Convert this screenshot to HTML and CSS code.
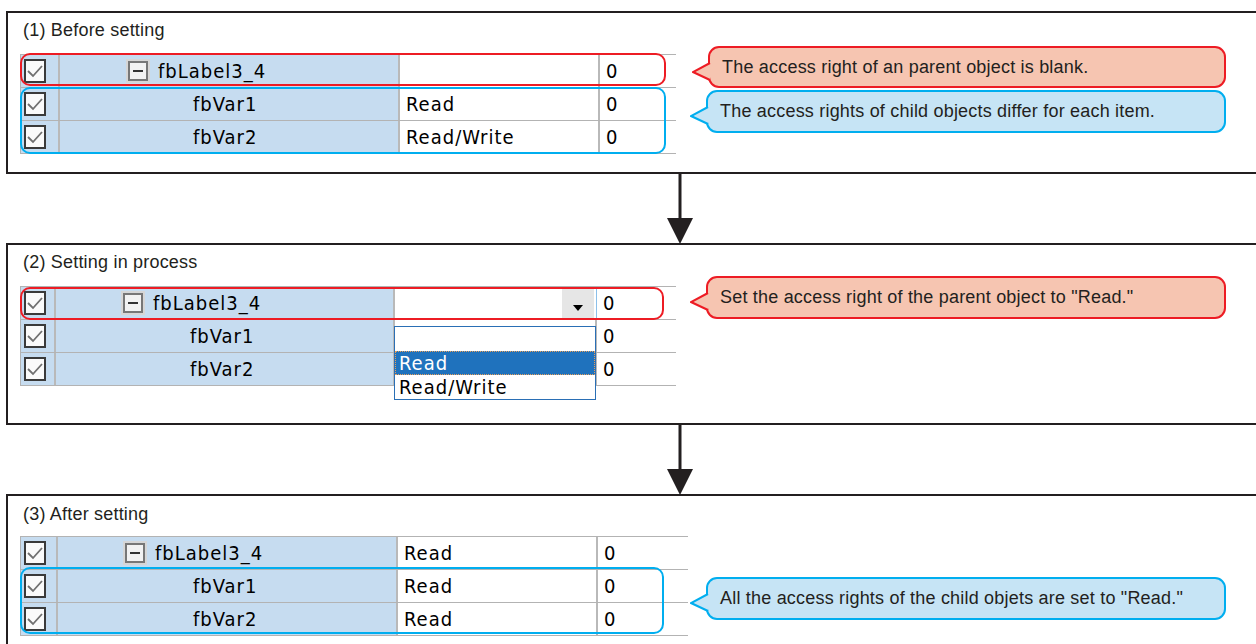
FILE: index.html
```html
<!DOCTYPE html>
<html>
<head>
  <title>Access Right Setting</title>
  <link rel="stylesheet" href="styles.css">
</head>
<body>
  <div class="page">

    <section class="panel panel-before">
      <h2 class="panel-title">(1) Before setting</h2>
      <div class="grid-wrap">
        <div class="grid">
          <div class="row">
            <div class="cell cell-check"><span class="checkbox"></span></div>
            <div class="cell cell-name parent"><span class="toggle"></span>fbLabel3_4</div>
            <div class="cell cell-access"></div>
            <div class="cell cell-value">0</div>
          </div>
          <div class="row">
            <div class="cell cell-check"><span class="checkbox"></span></div>
            <div class="cell cell-name child">fbVar1</div>
            <div class="cell cell-access">Read</div>
            <div class="cell cell-value">0</div>
          </div>
          <div class="row">
            <div class="cell cell-check"><span class="checkbox"></span></div>
            <div class="cell cell-name child">fbVar2</div>
            <div class="cell cell-access">Read/Write</div>
            <div class="cell cell-value">0</div>
          </div>
        </div>
        <div class="mark mark-red mark-parent"></div>
        <div class="mark mark-blue mark-children"></div>
      </div>
      <div class="notes">
        <div class="note note-red">
          <svg class="pointer" width="19" height="22" viewBox="0 0 19 22"><path d="M18 2 L1 11 L18 19"/></svg>
          The access right of an parent object is blank.
        </div>
        <div class="note note-blue">
          <svg class="pointer" width="19" height="22" viewBox="0 0 19 22"><path d="M18 2 L1 11 L18 19"/></svg>
          The access rights of child objects differ for each item.
        </div>
      </div>
    </section>

    <div class="connector">
      <svg width="28" height="70" viewBox="0 0 28 70"><line x1="14" y1="0" x2="14" y2="48"/><polygon points="1,44 27,44 14,70"/></svg>
    </div>

    <section class="panel panel-process">
      <h2 class="panel-title">(2) Setting in process</h2>
      <div class="grid-wrap">
        <div class="grid">
          <div class="row">
            <div class="cell cell-check"><span class="checkbox"></span></div>
            <div class="cell cell-name parent"><span class="toggle"></span>fbLabel3_4</div>
            <div class="cell cell-access combo"><span class="combo-btn"></span></div>
            <div class="cell cell-value focus">0</div>
          </div>
          <div class="row">
            <div class="cell cell-check"><span class="checkbox"></span></div>
            <div class="cell cell-name child">fbVar1</div>
            <div class="cell cell-access"></div>
            <div class="cell cell-value">0</div>
          </div>
          <div class="row">
            <div class="cell cell-check"><span class="checkbox"></span></div>
            <div class="cell cell-name child">fbVar2</div>
            <div class="cell cell-access"></div>
            <div class="cell cell-value">0</div>
          </div>
        </div>
        <ul class="dropdown">
          <li></li>
          <li class="selected">Read</li>
          <li>Read/Write</li>
        </ul>
        <div class="mark mark-red mark-parent"></div>
      </div>
      <div class="notes">
        <div class="note note-red">
          <svg class="pointer" width="19" height="22" viewBox="0 0 19 22"><path d="M18 2 L1 11 L18 19"/></svg>
          Set the access right of the parent object to "Read."
        </div>
      </div>
    </section>

    <div class="connector">
      <svg width="28" height="70" viewBox="0 0 28 70"><line x1="14" y1="0" x2="14" y2="48"/><polygon points="1,44 27,44 14,70"/></svg>
    </div>

    <section class="panel panel-after">
      <h2 class="panel-title">(3) After setting</h2>
      <div class="grid-wrap">
        <div class="grid">
          <div class="row">
            <div class="cell cell-check"><span class="checkbox"></span></div>
            <div class="cell cell-name parent"><span class="toggle"></span>fbLabel3_4</div>
            <div class="cell cell-access">Read</div>
            <div class="cell cell-value">0</div>
          </div>
          <div class="row">
            <div class="cell cell-check"><span class="checkbox"></span></div>
            <div class="cell cell-name child">fbVar1</div>
            <div class="cell cell-access">Read</div>
            <div class="cell cell-value">0</div>
          </div>
          <div class="row">
            <div class="cell cell-check"><span class="checkbox"></span></div>
            <div class="cell cell-name child">fbVar2</div>
            <div class="cell cell-access">Read</div>
            <div class="cell cell-value">0</div>
          </div>
        </div>
        <div class="mark mark-blue mark-children"></div>
      </div>
      <div class="notes">
        <div class="note note-blue">
          <svg class="pointer" width="19" height="22" viewBox="0 0 19 22"><path d="M18 2 L1 11 L18 19"/></svg>
          All the access rights of the child objets are set to "Read."
        </div>
      </div>
    </section>

  </div>
</body>
</html>
```

FILE: styles.css
```css
html, body {
  margin: 0;
  height: 644px;
  overflow: hidden;
  background: #fff;
}

body {
  font-family: "Liberation Sans", Arial, sans-serif;
  color: #231f20;
}

.page {
  padding: 11px 0 0 6px;
}

/* panels */

.panel {
  width: 1280px;
  border: 2px solid #231f20;
  box-sizing: border-box;
  display: grid;
  grid-template-columns: 698px 520px;
  grid-template-rows: auto 1fr;
}

.panel-before {
  height: 163px;
  padding-top: 7px;
}

.panel-process {
  height: 182px;
  padding-top: 7px;
}

.panel-after {
  height: 200px;
  padding-top: 8px;
}

.panel-title {
  grid-column: 1;
  grid-row: 1;
  margin: 0 0 0 15px;
  font-size: 18px;
  letter-spacing: 0.2px;
  font-weight: normal;
  line-height: 20px;
}

.panel-before .panel-title,
.panel-process .panel-title {
  margin-bottom: 14px;
}

.panel-after .panel-title {
  margin-bottom: 12px;
}

/* grid */

.grid-wrap {
  grid-column: 1;
  grid-row: 2;
  position: relative;
  margin-left: 12px;
  align-self: start;
}

.panel-before { --check: 40px; --name: 340px; --access: 200px; --value: 76px; --toggle: 68px; --child: 133px; }
.panel-process { --check: 36px; --name: 339px; --access: 202px; --value: 79px; --toggle: 67px; --child: 134px; }
.panel-after { --check: 38px; --name: 340px; --access: 200px; --value: 90px; --toggle: 67px; --child: 135px; }

.grid {
  display: flex;
  flex-direction: column;
  width: calc(var(--check) + var(--name) + var(--access) + var(--value));
  border-top: 1px solid #b3b3b3;
  font-family: "Liberation Sans Narrow", "DejaVu Sans Condensed", sans-serif;
  font-size: 20px;
  letter-spacing: 1px;
  color: #000;
}

.row {
  display: grid;
  grid-template-columns: var(--check) var(--name) var(--access) var(--value);
  height: 32px;
  border-bottom: 1px solid #b3b3b3;
}

.cell {
  display: flex;
  align-items: center;
  box-sizing: border-box;
  border-right: 2px solid #b9b9b9;
  padding-left: 6px;
  white-space: nowrap;
}

.cell-check {
  background: #c6dcf0;
  border-left: 1px solid #b3b3b3;
  padding-left: 3px;
}

.cell-name {
  background: #c6dcf0;
}

.cell-name.parent {
  padding-left: var(--toggle);
}

.cell-name.child {
  padding-left: var(--child);
}

.cell-access {
  background: #fff;
}

.cell-value {
  background: #fff;
  border-right: none;
}

.checkbox {
  width: 22px;
  height: 24px;
  box-sizing: border-box;
  border: 2px solid #3a3a3a;
  background: #fafafa url("data:image/svg+xml,%3Csvg xmlns='http://www.w3.org/2000/svg' width='18' height='20' viewBox='0 0 18 20'%3E%3Cpath d='M2 10 L7 15 L16 5' fill='none' stroke='%23707070' stroke-width='1.8'/%3E%3C/svg%3E") no-repeat center;
}

.toggle {
  flex: none;
  width: 20px;
  height: 20px;
  box-sizing: border-box;
  margin-right: 10px;
  border: 2px solid #777;
  background: #f2f2f2;
  box-shadow: 0 0 0 2px #d6d6d6;
  position: relative;
}

.toggle::after {
  content: "";
  position: absolute;
  left: 3px;
  right: 3px;
  top: 7px;
  height: 2px;
  background: #333;
}

/* combo box in step 2 */

.combo {
  justify-content: flex-end;
  padding: 0;
  border-right: 1px solid #8cc0ea;
}

.combo-btn {
  width: 32px;
  height: 100%;
  margin-right: 2px;
  background: #e6e6e6 url("data:image/svg+xml,%3Csvg xmlns='http://www.w3.org/2000/svg' width='10' height='6'%3E%3Cpolygon points='0,0 10,0 5,6' fill='%23000'/%3E%3C/svg%3E") no-repeat 11px 18px;
}

.dropdown {
  position: absolute;
  left: calc(var(--check) + var(--name) - 1px);
  top: 40px;
  width: 200px;
  margin: 0;
  padding: 0;
  list-style: none;
  border: 1px solid #2a6fb5;
  background: #fff;
  font-family: "Liberation Sans Narrow", "DejaVu Sans Condensed", sans-serif;
  font-size: 20px;
  letter-spacing: 1px;
  color: #000;
}

.dropdown li {
  height: 24px;
  line-height: 24px;
  padding-left: 4px;
  box-sizing: border-box;
}

.dropdown li.selected {
  background: #1f72bd;
  color: #fff;
  outline: 1px dotted #e6a05c;
  outline-offset: -1px;
}

/* highlight outlines */

.mark {
  position: absolute;
  left: 0;
  width: 646px;
  box-sizing: border-box;
  border: 2px solid;
  border-radius: 10px;
}

.mark-red {
  border-color: #ed1c24;
}

.mark-blue {
  border-color: #00aeef;
}

.mark-parent {
  top: -1px;
  height: 33px;
}

.mark-children {
  top: 33px;
  height: 67px;
}

.panel-process .mark-parent {
  top: 1px;
  width: 644px;
}

.panel-after .mark-children {
  top: 31px;
  width: 644px;
}

/* callouts */

.notes {
  grid-column: 2;
  grid-row: 1 / span 2;
  display: flex;
  flex-direction: column;
  gap: 2px;
  align-self: start;
}

.panel-before .notes {
  margin-top: 26px;
}

.panel-process .notes {
  margin-top: 24px;
}

.panel-after .notes {
  margin-top: 73px;
}

.note {
  position: relative;
  height: 43px;
  box-sizing: border-box;
  border: 2px solid;
  border-radius: 11px;
  padding-left: 12px;
  display: flex;
  align-items: center;
  font-size: 18px;
  letter-spacing: 0.2px;
  color: #231f20;
}

.note-red {
  background: #f6c5b1;
  border-color: #ed1c24;
}

.note-blue {
  background: #c6e4f5;
  border-color: #00aeef;
}

.panel-before .note-red {
  margin-left: 2px;
  height: 42px;
}

.pointer {
  position: absolute;
  left: -18px;
  top: 13px;
}

.pointer path {
  stroke-width: 2;
  stroke-linejoin: miter;
}

.note-red .pointer path {
  fill: #f6c5b1;
  stroke: #ed1c24;
}

.note-blue .pointer path {
  fill: #c6e4f5;
  stroke: #00aeef;
}

/* arrows between steps */

.connector {
  height: 69px;
  padding-left: 660px;
}

.connector svg {
  display: block;
}

.connector line {
  stroke: #231f20;
  stroke-width: 3;
}

.connector polygon {
  fill: #231f20;
}
```
